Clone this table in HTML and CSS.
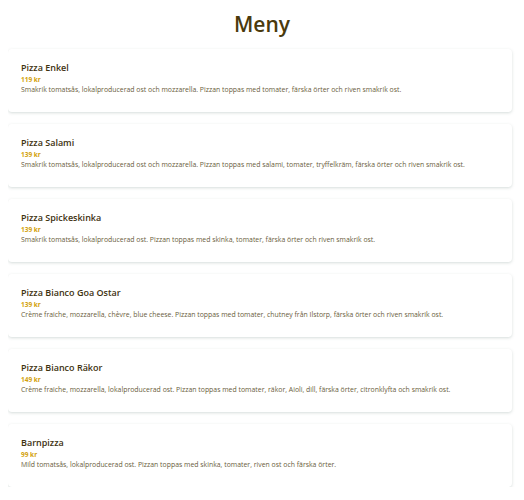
FILE: index.html
```html
<!DOCTYPE html>
<html lang="sv">

<head>
    <meta charset="UTF-8">
    <meta name="viewport" content="width=device-width, initial-scale=1.0">
    <title>Meny</title>
    <link rel="stylesheet" href="styles.css">
</head>

<body>
    <h1 class="title">Meny</h1>

    <div class="menu">
        <div class="item">
            <h3>Pizza Enkel</h3>
            <p class="price">119 kr</p>
            <p class="desc">Smakrik tomatsås, lokalproducerad ost och mozzarella. Pizzan toppas med tomater, färska örter och riven smakrik ost.</p>
        </div>
        <div class="item">
            <h3>Pizza Salami</h3>
            <p class="price">139 kr</p>
            <p class="desc">Smakrik tomatsås, lokalproducerad ost och mozzarella. Pizzan toppas med salami, tomater, tryffelkräm, färska örter och riven smakrik ost.</p>
        </div>
        <div class="item">
            <h3>Pizza Spickeskinka</h3>
            <p class="price">139 kr</p>
            <p class="desc">Smakrik tomatsås, lokalproducerad ost. Pizzan toppas med skinka, tomater, färska örter och riven smakrik ost.</p>
        </div>
        <div class="item">
            <h3>Pizza Bianco Goa Ostar</h3>
            <p class="price">139 kr</p>
            <p class="desc">Crème fraiche, mozzarella, chèvre, blue cheese. Pizzan toppas med tomater, chutney från Ilstorp, färska örter och riven smakrik ost.</p>
        </div>
        <div class="item">
            <h3>Pizza Bianco Räkor</h3>
            <p class="price">149 kr</p>
            <p class="desc">Crème fraiche, mozzarella, lokalproducerad ost. Pizzan toppas med tomater, räkor, Aioli, dill, färska örter, citronklyfta och smakrik ost.</p>
        </div>
        <div class="item">
            <h3>Barnpizza</h3>
            <p class="price">99 kr</p>
            <p class="desc">Mild tomatsås, lokalproducerad ost. Pizzan toppas med skinka, tomater, riven ost och färska örter.</p>
        </div>
    </div>
</body>

</html>
```

FILE: styles.css
```css
body {
    margin: 8px;
    background-color: #fff;
    font-family: "Open Sans", sans-serif;
}

.title {
    margin: 0;
    padding: 4px 0 12px;
    text-align: center;
    font-size: 21px;
    line-height: 25px;
    font-weight: 600;
    color: #4a3a0c;
}

.menu {
    display: flex;
    flex-direction: column;
    gap: 12px;
    padding-right: 4px;
}

.item {
    height: 63px;
    box-sizing: border-box;
    padding: 13px 13px 0;
    background-color: #fff;
    border-radius: 4px;
    box-shadow: 0 1px 3px rgba(90, 120, 110, 0.25);
}

.item h3 {
    margin: 0;
    font-size: 9px;
    line-height: 12px;
    font-weight: 600;
    color: #3e3210;
}

.price {
    margin: 0;
    font-size: 6.5px;
    line-height: 11px;
    font-weight: 700;
    color: #d3a20c;
}

.desc {
    margin: 0;
    font-size: 6.9px;
    line-height: 10px;
    color: #6a5d3c;
}
```
